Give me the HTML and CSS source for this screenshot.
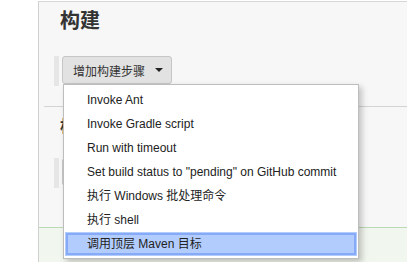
FILE: index.html
```html
<!DOCTYPE html>
<html lang="zh-CN">
<head>
  <meta charset="UTF-8">
  <title>构建</title>
  <link rel="stylesheet" href="styles.css">
</head>
<body>
  <div class="page">
    <div class="side"></div>
    <div class="main">
      <!-- 构建 -->
      <div class="section">
        <h2 class="section-title">构建</h2>
        <div class="step-row">
          <div class="dropdown">
            <button class="add-btn">增加构建步骤<span class="caret"></span></button>
            <ul class="menu">
              <li class="menu-item">Invoke Ant</li>
              <li class="menu-item">Invoke Gradle script</li>
              <li class="menu-item">Run with timeout</li>
              <li class="menu-item">Set build status to "pending" on GitHub commit</li>
              <li class="menu-item">执行 Windows 批处理命令</li>
              <li class="menu-item">执行 shell</li>
              <li class="menu-item selected">调用顶层 Maven 目标</li>
            </ul>
          </div>
        </div>
      </div>

      <!-- 构建后操作 (mostly hidden behind the menu) -->
      <div class="section next">
        <h3 class="section-title small">构建后操作</h3>
        <div class="step-row">
          <button class="add-btn blank" aria-label="增加构建后操作步骤"></button>
        </div>
      </div>

      <div class="bottom-bar"></div>
    </div>
  </div>
</body>
</html>
```

FILE: styles.css
```css
body {
  margin: 0;
  font-family: "Liberation Sans", "Noto Sans CJK SC", sans-serif;
  font-size: 12px;
  color: #333;
  background: #fff;
}
.page {
  display: flex;
  height: 262px;
  padding-top: 1px;
  box-sizing: border-box;
  overflow: hidden;
}
.side {
  width: 38px;
  flex: none;
}
.main {
  flex: 1;
  background: #f7f7f7;
  border-left: 1px solid #d0d0d0;
  border-top: 1px solid #d6d6d6;
  display: flex;
  flex-direction: column;
}
.section {
  padding-left: 15px;
}
.section-title {
  margin: 5px 0 0 6px;
  font-size: 20px;
  line-height: 28px;
  font-weight: bold;
  color: #333;
}
.section-title.small {
  font-size: 16px;
  line-height: 24px;
  margin-top: 8px;
}
.next {
  margin-left: 5px;
  padding-left: 10px;
  margin-top: 20px;
  border-top: 1px solid #d4d4d4;
}
/* drag handle bar on the left */
.step-row {
  margin-top: 21px;
  border-left: 5px solid #e6e6e6;
  padding-left: 3px;
  height: 30px;
}
.next .step-row {
  margin-top: 19px;
}
.dropdown {
  position: relative;
  display: inline-block;
}
.add-btn {
  height: 28px;
  padding: 0 8px 0 10px;
  font-family: inherit;
  font-size: 12px;
  color: #333;
  background: #e2e2e2;
  border: 1px solid #c6c6c6;
  border-radius: 3px;
  display: flex;
  align-items: center;
}
.add-btn.blank {
  width: 140px;
}
.caret {
  display: inline-block;
  margin-left: 10px;
  border-left: 4px solid transparent;
  border-right: 4px solid transparent;
  border-top: 4px solid #222;
}
/* dropdown menu */
.menu {
  position: absolute;
  top: 28px;
  left: 1px;
  width: 294px;
  margin: 0;
  padding: 3px 0 2px;
  list-style: none;
  background: #fff;
  border: 1px solid #bdbdbd;
  box-shadow: 3px 3px 6px rgba(0, 0, 0, 0.22);
  z-index: 10;
}
.menu-item {
  height: 24px;
  line-height: 24px;
  padding-left: 23px;
  color: #222;
  white-space: nowrap;
}
.menu-item.selected {
  margin: 0 1px;
  padding-left: 22px;
  background: #b2cdfd;
  box-shadow: inset 0 0 0 1px #b2cdfd, inset 0 0 0 3px #86aaf6;
}
.bottom-bar {
  margin-top: auto;
  height: 34px;
  background: #f1f6ee;
  border-top: 1px solid #bcd8b4;
}
```
